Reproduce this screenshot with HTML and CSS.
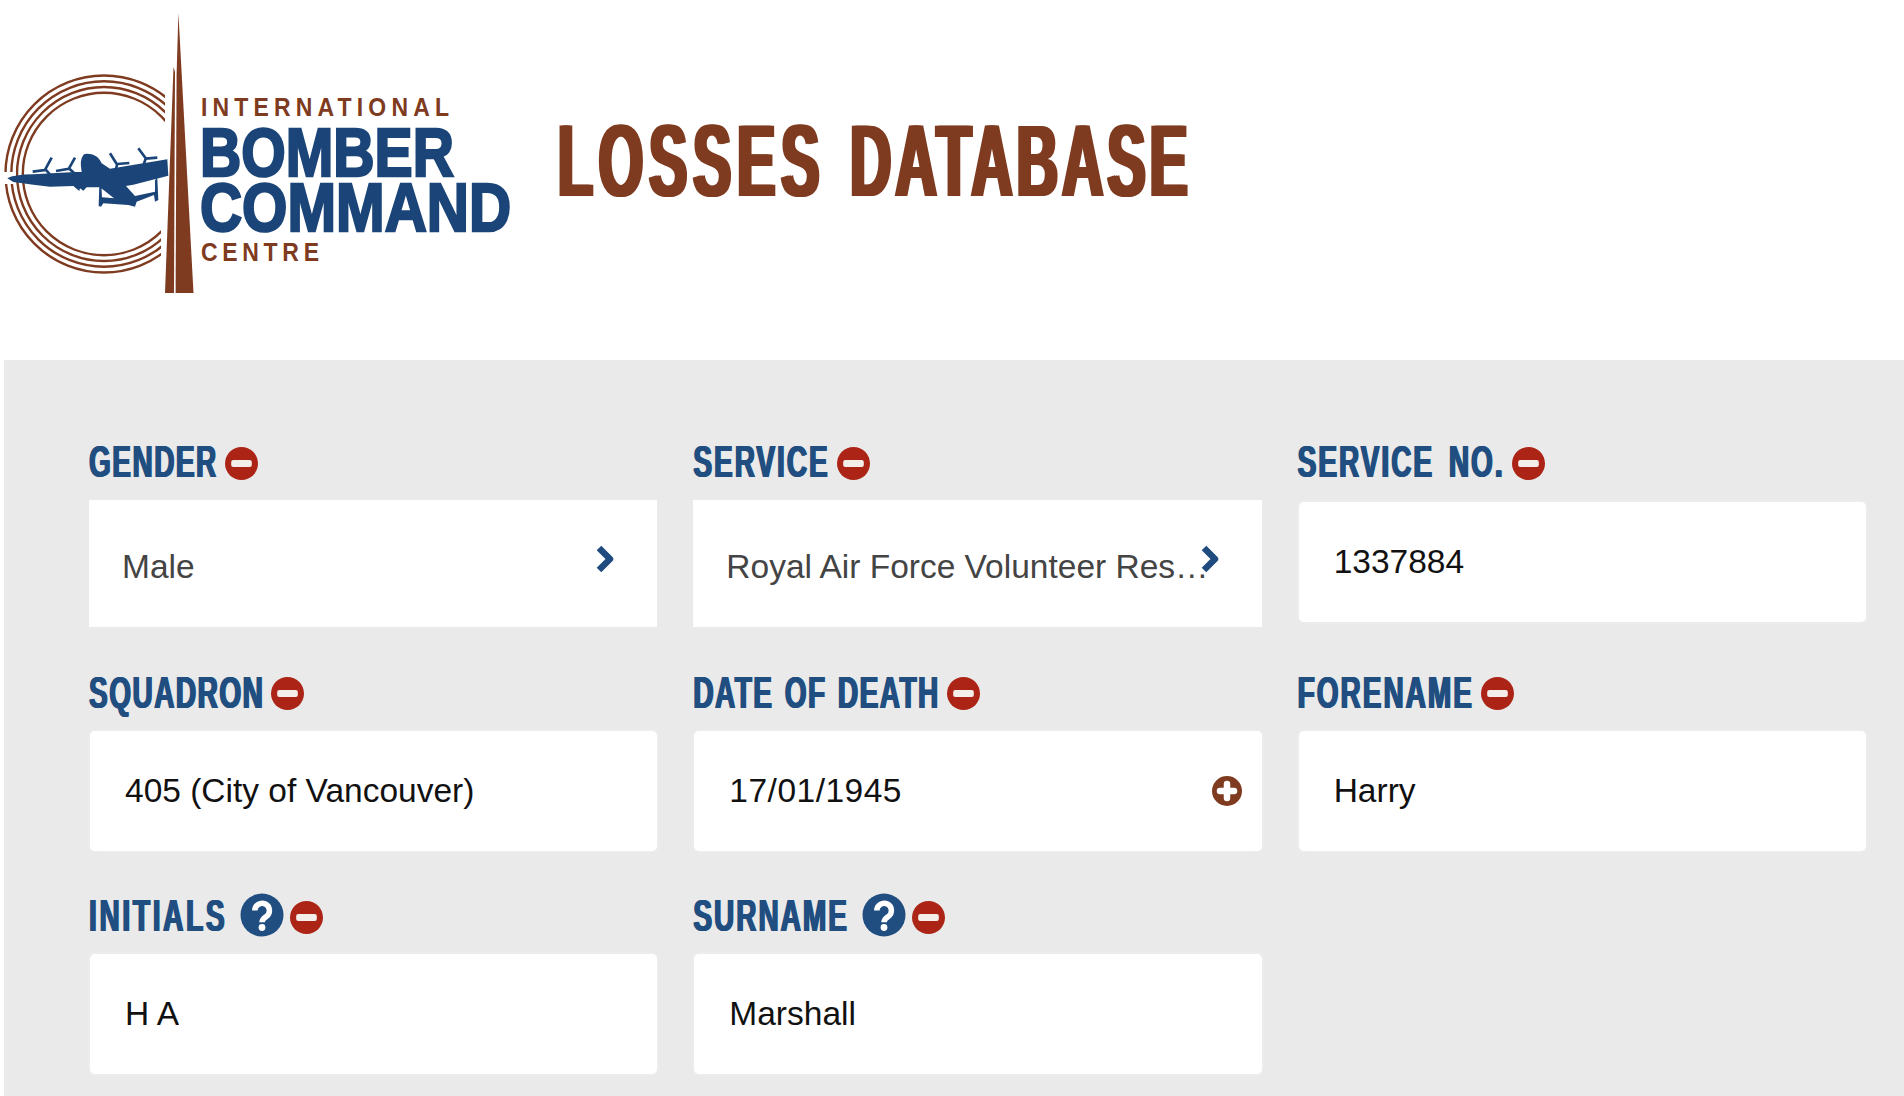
FILE: index.html
```html
<!DOCTYPE html>
<html lang="en">
<head>
<meta charset="utf-8">
<title>Losses Database</title>
<link rel="stylesheet" href="styles.css">
</head>
<body>
<svg width="0" height="0" class="defs" aria-hidden="true">
  <symbol id="minus" viewBox="0 0 32 32"><circle cx="16" cy="16" r="16" fill="#ab2416"/><rect x="6" y="12.500" width="20" height="7" rx="2" fill="#f3eeea"/></symbol>
  <symbol id="help" viewBox="0 0 44 44"><circle cx="22" cy="22" r="21.500" fill="#214e80"/><path d="M14.800 17.500a7.300 7.300 0 1 1 11.500 6c-2.600 1.900-4.300 3-4.300 5.800" fill="none" stroke="#fff" stroke-width="5.500"/><circle cx="22" cy="34.500" r="3.400" fill="#fff"/></symbol>
  <symbol id="chev" viewBox="0 0 20 30"><path d="M4 4l11 11L4 26" fill="none" stroke="#1f4b7f" stroke-width="6.500" stroke-linejoin="round"/></symbol>
</svg>
<header class="top">
  <svg class="logo" width="520" height="300" viewBox="0 0 520 300" role="img" aria-label="International Bomber Command Centre">
    <defs>
      <clipPath id="rings"><path d="M0 60H165V130L161 225V290H0V184H16V172H0Z"/></clipPath>
    </defs>
    <g clip-path="url(#rings)" fill="none" stroke="#7f3b20" stroke-width="2.400">
      <circle cx="104" cy="174" r="98.500"/>
      <circle cx="104" cy="174" r="92.700"/>
      <circle cx="104" cy="174" r="87"/>
      <circle cx="104" cy="174" r="81.200"/>
    </g>
    <polygon points="178.400,13 193.500,293 175.600,293 176.600,75" fill="#7f3b20"/>
    <polygon points="173.500,67 175,72 174,293 165,293" fill="#7f3b20"/>
    <g transform="translate(0 60) scale(.3333)" fill="#1b4578">
      <path d="M22 355Q40 344 100 343L225 336 245 336Q238 300 250 285 255 279 275 283 295 288 305 310L330 326 502 298 505 347 400 374 378 378 405 408 465 395 465 360 472 355 475 420 465 425 462 405 410 425 405 440 385 435 310 430 303 440 296 438 298 375 304 375 306 412 342 415 300 382 260 382 250 392 240 385 238 393 220 378 150 380 100 374 40 366Z"/>
      <path d="M155 293l-20 37M98 335l40-5 12 14M225 293l-18 32M168 333l40-7 15 14M330 280l22 35M352 312l36-3M415 265l24 32M437 296l35-3M352 312l-5 18M437 296l-6 18" fill="none" stroke="#1b4578" stroke-width="8"/>
    </g>
    <text class="lg-small" transform="translate(201 116) scale(1 1.1)" textLength="248" lengthAdjust="spacing">INTERNATIONAL</text>
    <text class="lg-big" x="200" y="176" textLength="254" lengthAdjust="spacingAndGlyphs">BOMBER</text>
    <text class="lg-big" x="200" y="231" textLength="311" lengthAdjust="spacingAndGlyphs">COMMAND</text>
    <text class="lg-small" transform="translate(201 261) scale(1 1.1)" textLength="118" lengthAdjust="spacing">CENTRE</text>
  </svg>
  <h1 class="title"><span class="word-a">LOSSES</span> <span class="word-b">DATABASE</span></h1>
</header>
<main class="panel">
  <div class="grid">
    <div class="field">
      <div class="label"><span class="label-text">GENDER</span><svg class="ic-minus"><use href="#minus"/></svg></div>
      <div class="box select"><span class="val">Male</span><svg class="chev"><use href="#chev"/></svg></div>
    </div>
    <div class="field">
      <div class="label"><span class="label-text track-1">SERVICE</span><svg class="ic-minus"><use href="#minus"/></svg></div>
      <div class="box select"><span class="val">Royal Air Force Volunteer Reserve</span><svg class="chev"><use href="#chev"/></svg></div>
    </div>
    <div class="field">
      <div class="label"><span class="label-text track-1 wide-word">SERVICE NO.</span><svg class="ic-minus"><use href="#minus"/></svg></div>
      <div class="box input short"><span class="val">1337884</span></div>
    </div>
    <div class="field">
      <div class="label"><span class="label-text">SQUADRON</span><svg class="ic-minus"><use href="#minus"/></svg></div>
      <div class="box input"><span class="val">405 (City of Vancouver)</span></div>
    </div>
    <div class="field">
      <div class="label"><span class="label-text">DATE OF DEATH</span><svg class="ic-minus"><use href="#minus"/></svg></div>
      <div class="box input"><span class="val date">17/01/1945</span>
        <svg class="plus" viewBox="0 0 30 30"><circle cx="15" cy="15" r="15" fill="#7f3b20"/><path d="M15 8v14M8 15h14" stroke="#fff" stroke-width="6.500" stroke-linecap="round"/></svg>
      </div>
    </div>
    <div class="field">
      <div class="label"><span class="label-text track-1">FORENAME</span><svg class="ic-minus"><use href="#minus"/></svg></div>
      <div class="box input"><span class="val">Harry</span></div>
    </div>
    <div class="field">
      <div class="label"><span class="label-text track-2">INITIALS</span><svg class="ic-help"><use href="#help"/></svg><svg class="ic-minus after-help"><use href="#minus"/></svg></div>
      <div class="box input"><span class="val">H A</span></div>
    </div>
    <div class="field">
      <div class="label"><span class="label-text track-1">SURNAME</span><svg class="ic-help"><use href="#help"/></svg><svg class="ic-minus after-help"><use href="#minus"/></svg></div>
      <div class="box input"><span class="val">Marshall</span></div>
    </div>
  </div>
</main>
</body>
</html>
```
FILE: styles.css
```css
* { box-sizing: border-box; }
html, body { margin: 0; height: 100%; overflow: hidden; background: #fff; }
body { font-family: "Liberation Sans", Arial, sans-serif; }
.defs { position: absolute; }
.top { display: flex; align-items: flex-start; height: 360px; }
.logo { flex: none; width: 520px; height: 300px; display: block; }
.lg-small { font: 700 23px "Liberation Sans Narrow", "Liberation Sans", sans-serif; fill: #7f3b20; }
.lg-big { font: 700 69px "Liberation Sans Narrow", "Liberation Sans", sans-serif; fill: #1b4578; stroke: #1b4578; stroke-width: 2.500px; }
.title {
  margin: 112px 0 0 38px;
  font: 700 57px/96px "Liberation Sans Narrow", "Liberation Sans", sans-serif;
  color: #7f3b20;
  word-spacing: 9px;
  white-space: nowrap;
  transform: scaleY(1.78);
  text-shadow: 2.200px 0 0 #7f3b20, -2.200px 0 0 #7f3b20;
}
.word-a { letter-spacing: 6px; }
.word-b { letter-spacing: 4.200px; }
.panel { margin-left: 4px; height: 736px; background: #eaeaea; padding: 85px 38px 0 85px; overflow: hidden; }
.grid { display: grid; grid-template-columns: repeat(3, 1fr); column-gap: 36px; row-gap: 48.500px; }
.field { display: flex; flex-direction: column; min-width: 0; }
.label { display: flex; align-items: center; height: 55px; padding-bottom: 19px; color: #214e80; }
.label-text {
  font: 700 28px/1 "Liberation Sans Narrow", "Liberation Sans", sans-serif;
  letter-spacing: 1.500px;
  word-spacing: 2px;
  white-space: pre;
  transform: scaleY(1.6);
  text-shadow: .8px 0 0 #214e80, -.8px 0 0 #214e80;
}
.track-1 { letter-spacing: 2px; }
.track-2 { letter-spacing: 2.700px; }
.wide-word { word-spacing: 5px; }
.ic-minus { width: 33px; height: 33px; margin-left: 7px; flex: none; }
.ic-help { width: 44px; height: 44px; margin-left: 13px; flex: none; margin-top: -4px; }
.ic-minus.after-help { margin-left: 6px; }
.box { display: flex; align-items: center; background: #fff; font-size: 33.500px; }
.val { min-width: 0; white-space: nowrap; overflow: hidden; text-overflow: ellipsis; }
.date { letter-spacing: .5px; }
.select { height: 127px; padding: 6px 40px 0 33px; color: #444; position: relative; }
.select .val { width: 484px; }
.chev { position: absolute; right: 42px; top: 44px; width: 20px; height: 30px; }
.input { height: 120px; margin-left: 1px; padding: 0 20px 0 35px; color: #111; border-radius: 5px; position: relative; box-shadow: 0 0 3px #f4f4f4; }
.short { margin-top: 2px; }
.plus { position: absolute; right: 20px; top: 45px; width: 30px; height: 30px; }
```
